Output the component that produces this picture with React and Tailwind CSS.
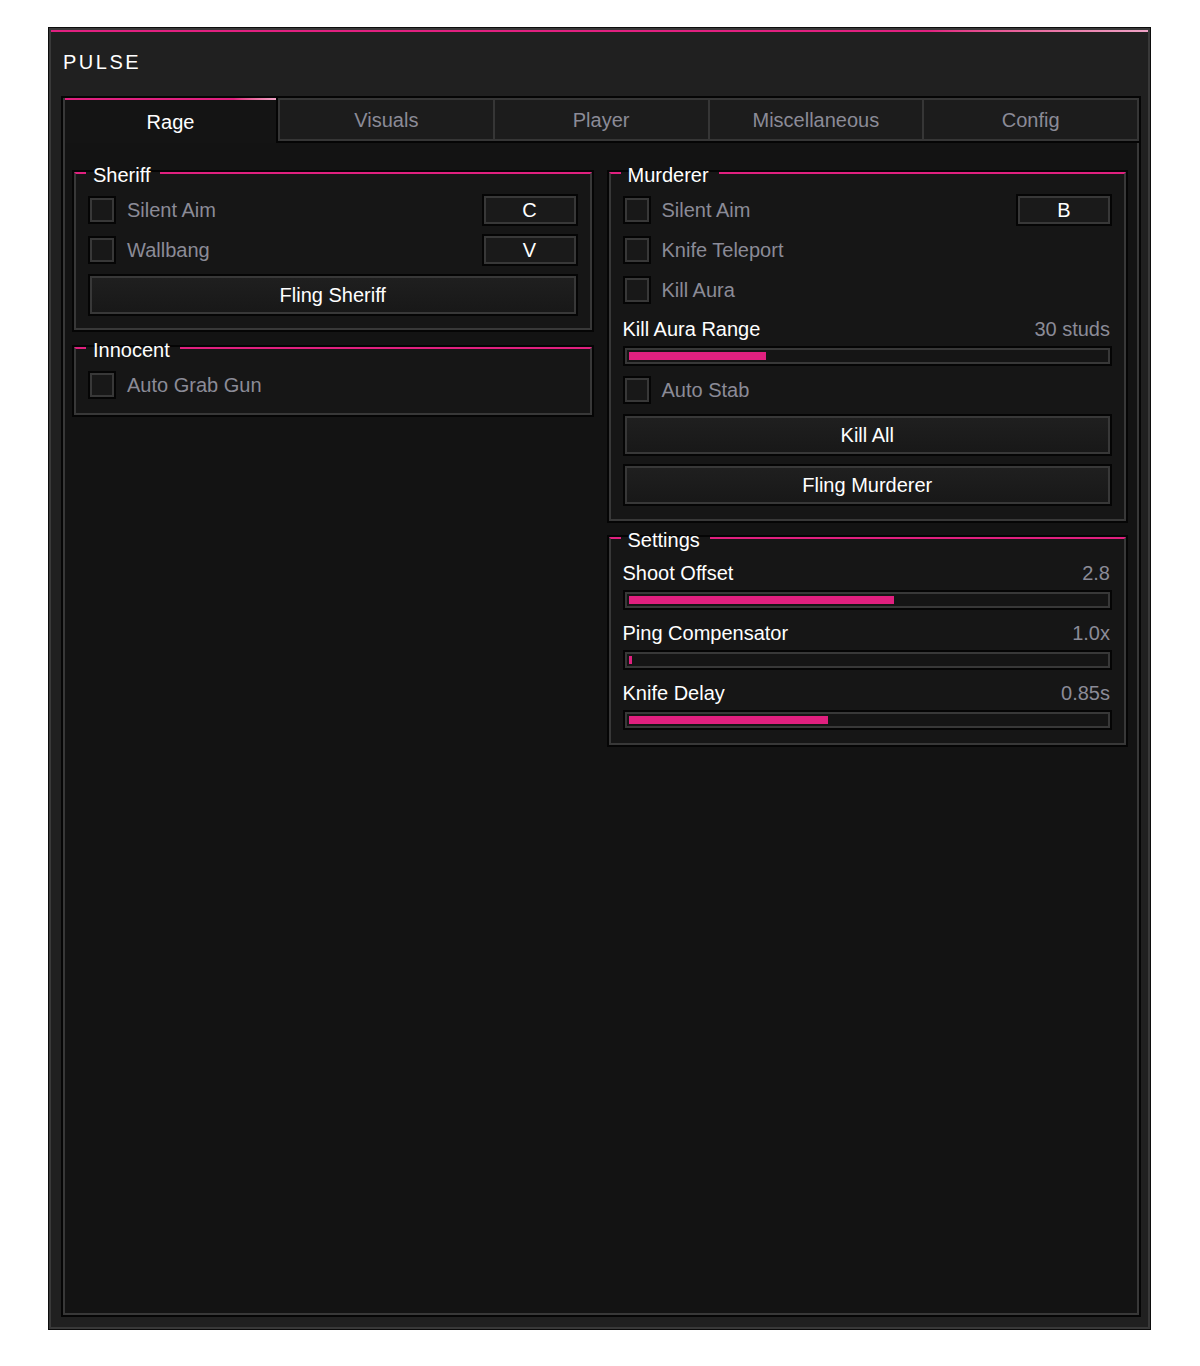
import React from 'react';

const tabs = ['Visuals', 'Player', 'Miscellaneous', 'Config'];

function Checkbox() {
    return <div className="w-[24px] h-[24px] shrink-0 border-2 border-[#383838] bg-[#181818] shadow-[0_0_0_2px_#050505]" />
}

function Toggle({ label, bind }) {
    return (
        <div className="flex items-center h-[28px]">
            <Checkbox />
            <span className="ml-[13px] text-[#8b8b97]">{label}</span>
            {bind && (
                <div className="ml-auto w-[92px] h-[28px] flex items-center justify-center border-2 border-[#383838] bg-[#1a1a1a] shadow-[0_0_0_2px_#050505] text-white">
                    {bind}
                </div>
            )}
        </div>
    )
}

function Button({ children }) {
    return (
        <div className="h-[38px] flex items-center justify-center border-2 border-[#383838] bg-linear-to-b from-[#1f1f1f] to-[#181818] shadow-[0_0_0_2px_#050505] text-white">
            {children}
        </div>
    )
}

function Slider({ label, value, fill }) {
    return (
        <div className="flex flex-col">
            <div className="flex items-center justify-between leading-[24px] -ml-[2px]">
                <span className="text-white">{label}</span>
                <span className="text-[#8b8b97]">{value}</span>
            </div>
            <div className="mt-[7px] h-[16px] border-2 border-[#383838] bg-[#151515] p-[2px] shadow-[0_0_0_2px_#050505]">
                <div className="h-full bg-[#e0207f]" style={{ width: fill }} />
            </div>
        </div>
    )
}

function Group({ title, children }) {
    return (
        <fieldset className="border-2 border-[#383838] border-t-[#e0207f] bg-[#161616] shadow-[0_0_0_2px_#050505]">
            <legend className="ml-[10px] pl-[7px] pr-[10px] leading-[24px] text-white">
                <span className="relative top-[2px]">{title}</span>
            </legend>
            {children}
        </fieldset>
    )
}

export default function App() {
    return (
        <div className="min-h-[1366px] bg-white pt-[27px] pl-[48px] font-['Liberation_Sans',Arial,sans-serif] text-[20px]">
            <div className="w-[1103px] h-[1303px] border border-[#0c0c0c]">
                <div className="h-full flex flex-col border-2 border-[#393939] bg-[#202020]">
                    <div className="h-[2px] bg-linear-to-r from-[#e0207f] via-[#e0207f] via-80% to-[#eea3c6]" />
                    <div className="h-[66px] pl-[12px] pt-[15px]">
                        <span className="leading-[24px] tracking-[2.5px] text-white">PULSE</span>
                    </div>

                    {/* tabs + content */}
                    <div className="flex-1 flex flex-col ml-[12px] mr-[9px] mb-[12px] shadow-[0_0_0_2px_#050505]">
                        <div className="flex h-[45px] shrink-0">
                            <div className="w-[213px] flex flex-col border-l-2 border-[#383838] bg-[#141414]">
                                <div className="h-[2px] bg-linear-to-r from-[#e0207f] via-[#e0207f] via-80% to-[#eea3c6]" />
                                <div className="flex-1 flex items-center justify-center text-white">Rage</div>
                            </div>
                            <div className="flex-1 flex bg-[#050505] pl-[2px] pb-[2px]">
                                {tabs.map((t, i) => (
                                    <div
                                        key={t}
                                        className={`flex-1 flex items-center justify-center border-y-2 border-l-2 border-[#363636] bg-[#1c1c1c] text-[#8b8b97] ${i === tabs.length - 1 ? 'border-r-2' : ''}`}
                                    >
                                        {t}
                                    </div>
                                ))}
                            </div>
                        </div>

                        <div className="flex-1 border-x-2 border-b-2 border-[#383838] bg-[#131313] pt-[18px] pl-[9px] pr-[11px] grid grid-cols-2 gap-x-[17px] items-start">
                            {/* left column */}
                            <div className="flex flex-col gap-[6px]">
                                <Group title="Sheriff">
                                    <div className="flex flex-col gap-[12px] px-[14px] pt-[11px] pb-[14px]">
                                        <Toggle label="Silent Aim" bind="C" />
                                        <Toggle label="Wallbang" bind="V" />
                                        <Button>Fling Sheriff</Button>
                                    </div>
                                </Group>
                                <Group title="Innocent">
                                    <div className="px-[14px] pt-[11px] pb-[14px]">
                                        <Toggle label="Auto Grab Gun" />
                                    </div>
                                </Group>
                            </div>

                            {/* right column */}
                            <div className="flex flex-col gap-[5px]">
                                <Group title="Murderer">
                                    <div className="flex flex-col px-[14px] pt-[11px] pb-[15px]">
                                        <Toggle label="Silent Aim" bind="B" />
                                        <div className="mt-[12px]"><Toggle label="Knife Teleport" /></div>
                                        <div className="mt-[12px]"><Toggle label="Kill Aura" /></div>
                                        <div className="mt-[13px]"><Slider label="Kill Aura Range" value="30 studs" fill="137px" /></div>
                                        <div className="mt-[12px]"><Toggle label="Auto Stab" /></div>
                                        <div className="mt-[12px]"><Button>Kill All</Button></div>
                                        <div className="mt-[12px]"><Button>Fling Murderer</Button></div>
                                    </div>
                                </Group>
                                <Group title="Settings">
                                    <div className="flex flex-col gap-[13px] px-[14px] pt-[11px] pb-[15px]">
                                        <Slider label="Shoot Offset" value="2.8" fill="265px" />
                                        <Slider label="Ping Compensator" value="1.0x" fill="3px" />
                                        <Slider label="Knife Delay" value="0.85s" fill="199px" />
                                    </div>
                                </Group>
                            </div>
                        </div>
                    </div>
                </div>
            </div>
        </div>
    );
}
